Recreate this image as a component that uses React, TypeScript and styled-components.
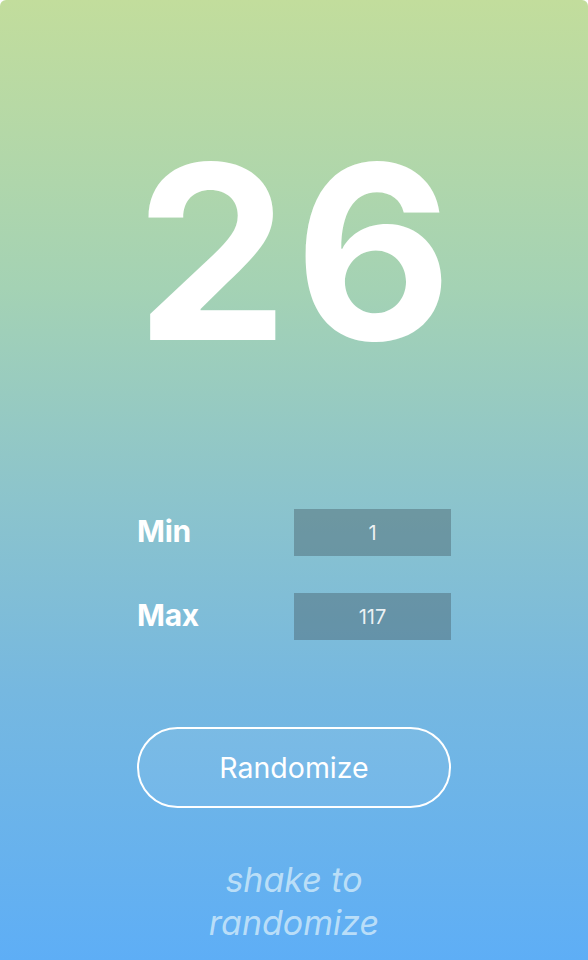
import React from "react";
import styled, { createGlobalStyle } from "styled-components";

const Global = createGlobalStyle`
  html, body { margin: 0; padding: 0; background: #ffffff; }
  * { box-sizing: border-box; }
`;

const Screen = styled.div`
  width: 588px;
  height: 960px;
  overflow: hidden;
  border-radius: 6px 6px 0 0;
  background: linear-gradient(180deg, #c2dd9c 0%, #a4d2b4 30%, #8cc4cc 52%, #76b8e0 72%, #5eaef6 100%);
  display: flex;
  flex-direction: column;
  align-items: center;
  font-family: Inter, "Noto Sans", sans-serif;
  color: #ffffff;
`;

const BigNumber = styled.div`
  margin-top: 131px;
  font-size: 243px;
  font-weight: 700;
  line-height: 243px;
  letter-spacing: 6px;
  padding-left: 6px;
  height: 243px;
`;

const Form = styled.div`
  margin-top: 135px;
  width: 314px;
  display: grid;
  grid-template-columns: 157px 157px;
  row-gap: 37px;
  align-items: center;
`;

const Label = styled.div`
  font-size: 30px;
  font-weight: 700;
  letter-spacing: -0.3px;
  padding-bottom: 4px;
`;

const Field = styled.div`
  height: 47px;
  background: rgba(65, 85, 95, 0.4);
  display: flex;
  align-items: center;
  justify-content: center;
  font-size: 20px;
  color: rgba(255, 255, 255, 0.88);
`;

const Button = styled.button`
  margin-top: 87px;
  width: 314px;
  height: 81px;
  border: 2.5px solid #ffffff;
  border-radius: 41px;
  background: rgba(255, 255, 255, 0.06);
  color: #ffffff;
  font-family: Inter, "Noto Sans", sans-serif;
  font-size: 28.5px;
  font-weight: 400;
  display: flex;
  align-items: center;
  justify-content: center;
  padding: 0;
`;

const Hint = styled.div`
  margin-top: 50px;
  font-size: 34px;
  font-style: italic;
  font-weight: 400;
  line-height: 43px;
  text-align: center;
  color: rgba(210, 235, 250, 0.8);
`;

export default function App() {
  return (
    <>
      <Global />
      <Screen>
        <BigNumber>26</BigNumber>
        <Form>
          <Label>Min</Label>
          <Field>1</Field>
          <Label>Max</Label>
          <Field>117</Field>
        </Form>
        <Button>Randomize</Button>
        <Hint>
          shake to
          <br />
          randomize
        </Hint>
      </Screen>
    </>
  );
}
